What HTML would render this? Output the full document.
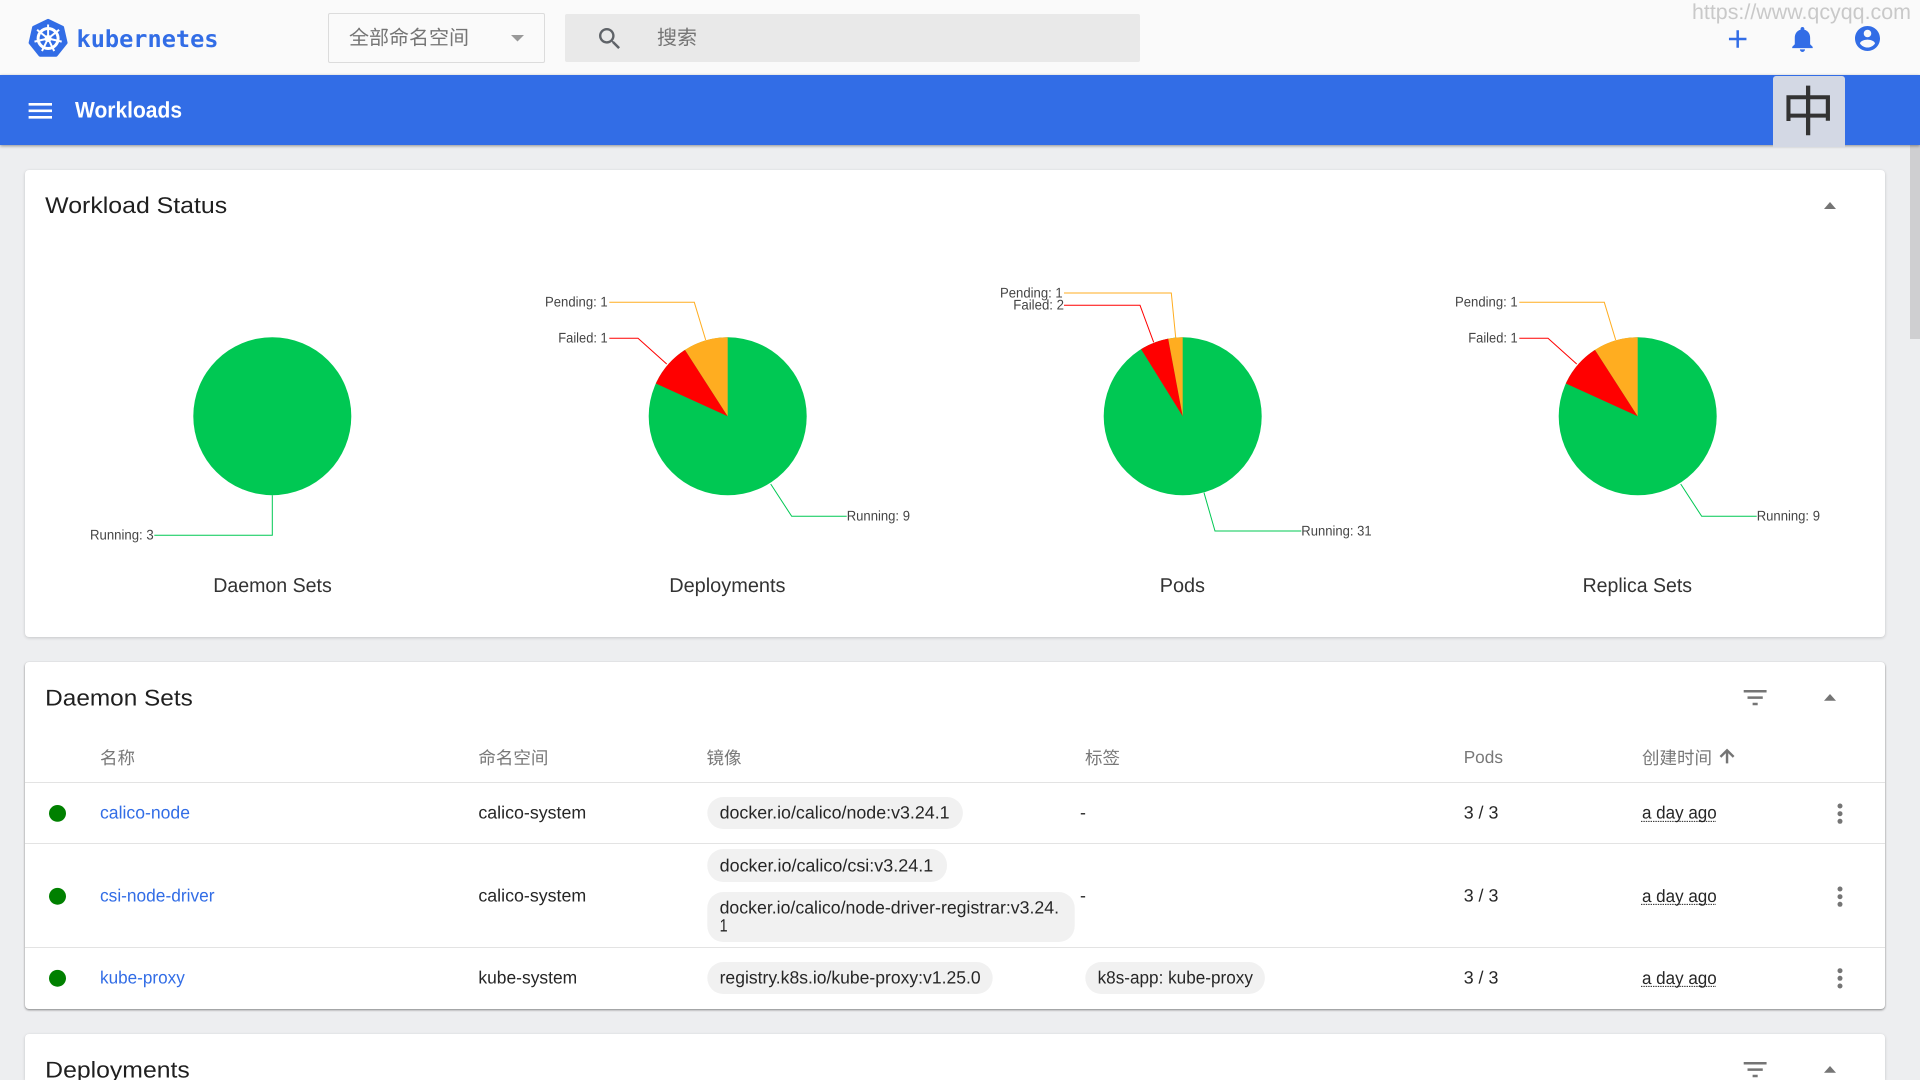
<!DOCTYPE html>
<html lang="zh">
<head>
<meta charset="utf-8">
<title>Workloads - Kubernetes Dashboard</title>
<style>
html,body{margin:0;padding:0;width:1920px;height:1080px;overflow:hidden;background:#edeef0}
#root{position:relative;width:1920px;height:1080px;overflow:hidden;background:#edeef0}
.abs{position:absolute}
.top{left:0;top:0;width:1920px;height:75px;background:#fafafa}
.bar{left:0;top:75px;width:1920px;height:70px;background:#326de6;box-shadow:0 1px 3px rgba(0,0,0,.4)}
.lang{left:1773px;top:76px;width:72px;height:71px;background:#d3d8e4;border-radius:3px 3px 0 0}
.select{left:328px;top:13px;width:215px;height:48px;border:1px solid #dcdcdc;border-radius:2px;background:#fafafa}
.search{left:565px;top:14px;width:575px;height:48px;background:#e9e9e9;border-radius:2px}
.card{left:25px;width:1860px;background:#fff;border-radius:4px;box-shadow:0 1px 3px rgba(0,0,0,.16),0 0 1px rgba(0,0,0,.05)}
.thumb{left:1910px;top:145px;width:10px;height:194px;background:#cfcfd1}
svg{position:absolute;left:0;top:0}
text{font-family:"Liberation Sans","Noto Sans CJK SC",sans-serif;text-rendering:geometricPrecision}
.t{font-size:22.8px;fill:#1f1f1f}
.lb{font-size:14px;fill:#444;transform:translateY(-.7px)}
.pt{font-size:20px;fill:#333}
.h{font-size:17.5px;fill:#787878;transform:translateY(-.4px)}
.c{font-size:17.8px;fill:#262626;transform:translateY(-.6px)}
.a{font-size:17.8px;fill:#326de6;transform:translateY(-.6px)}
.ic{fill:#757575}
</style>
</head>
<body>
<div id="root">
<div class="abs thumb"></div>
<div class="abs top"></div>
<div class="abs bar"></div>
<div class="abs lang"></div>
<div class="abs select"></div>
<div class="abs search"></div>
<div class="abs card" style="top:170px;height:467px"></div>
<div class="abs card" style="top:662px;height:347px;box-shadow:0 1px 2px rgba(0,0,0,.45),0 0 1px rgba(0,0,0,.06)"></div>
<div class="abs card" style="top:1034px;height:46px;border-radius:4px 4px 0 0"></div>

<svg width="1920" height="1080" viewBox="0 0 1920 1080" xmlns="http://www.w3.org/2000/svg">
<!-- logo -->
<g transform="translate(.6 0)">
<polygon points="47.5,20.4 62,27.4 65.5,42.8 55.6,55.2 39.4,55.2 29.5,42.8 33,27.4" fill="#326de6" stroke="#326de6" stroke-width="3" stroke-linejoin="round"/>
<g stroke="#fff" fill="none">
<circle cx="47.5" cy="38.5" r="10" stroke-width="3"/>
<g stroke-width="2">
<line x1="47.5" y1="38.5" x2="47.5" y2="24.5"/>
<line x1="47.5" y1="38.5" x2="58.5" y2="29.8"/>
<line x1="47.5" y1="38.5" x2="61.1" y2="41.6"/>
<line x1="47.5" y1="38.5" x2="53.6" y2="51.1"/>
<line x1="47.5" y1="38.5" x2="41.4" y2="51.1"/>
<line x1="47.5" y1="38.5" x2="33.9" y2="41.6"/>
<line x1="47.5" y1="38.5" x2="36.5" y2="29.8"/>
</g>
</g>
<circle cx="47.5" cy="38.5" r="3.5" fill="#fff"/>
</g>
<text x="76.5" y="47" style="font-family:'DejaVu Sans Mono',monospace;font-weight:700;font-size:23.3px;fill:#326de6" textLength="142" lengthAdjust="spacingAndGlyphs">kubernetes</text>

<!-- namespace + search -->
<text x="349" y="44.6" style="font-size:20px;fill:#757575">全部命名空间</text>
<polygon points="511,35 524,35 517.5,41.5" fill="#999"/>
<g transform="translate(595.4 24.4) scale(1.2)"><path fill="#5f6368" d="M15.5 14h-.79l-.28-.27C15.41 12.59 16 11.11 16 9.5 16 5.91 13.09 3 9.5 3S3 5.91 3 9.5 5.91 16 9.5 16c1.61 0 3.09-.59 4.23-1.57l.27.28v.79l5 4.99L20.49 19l-4.99-5zm-6 0C7.01 14 5 11.99 5 9.5S7.01 5 9.5 5 14 7.01 14 9.5 11.99 14 9.5 14z"/></g>
<text x="657" y="44.6" style="font-size:20px;fill:#757575">搜索</text>

<!-- watermark + right actions -->
<text x="1692" y="19" style="font-size:21.5px;fill:#c9c9c9" textLength="219" lengthAdjust="spacingAndGlyphs">https://www.qcyqq.com</text>
<g transform="translate(1722.7 24) scale(1.25)"><path fill="#326de6" d="M19 13h-6v6h-2v-6H5v-2h6V5h2v6h6v2z"/></g>
<g transform="translate(1787.1 23.8) scale(1.28)"><path fill="#326de6" d="M12 22c1.1 0 2-.9 2-2h-4c0 1.1.89 2 2 2zm6-6v-5c0-3.07-1.64-5.64-4.5-6.32V4c0-.83-.67-1.5-1.5-1.5s-1.5.67-1.5 1.5v.68C7.63 5.36 6 7.92 6 11v5l-2 2v1h16v-1l-2-2z"/></g>
<g transform="translate(1852.5 23.5) scale(1.25)"><path fill="#326de6" d="M12 2C6.48 2 2 6.48 2 12s4.48 10 10 10 10-4.48 10-10S17.52 2 12 2zm0 3c1.66 0 3 1.34 3 3s-1.34 3-3 3-3-1.34-3-3 1.34-3 3-3zm0 14.2c-2.5 0-4.71-1.28-6-3.22.03-1.99 4-3.08 6-3.08 1.99 0 5.97 1.09 6 3.08-1.29 1.94-3.5 3.22-6 3.22z"/></g>

<!-- toolbar -->
<g transform="translate(24.7 95.2) scale(1.3)"><path fill="#fff" d="M3 18h18v-2H3v2zm0-5h18v-2H3v2zm0-7v2h18V6H3z"/></g>
<text x="75" y="117.3" style="font-size:22.5px;font-weight:700;fill:#fff" textLength="107" lengthAdjust="spacingAndGlyphs">Workloads</text>
<text x="1808.3" y="131" text-anchor="middle" style="font-size:54px;fill:#333">中</text>

<!-- workload status -->
<text class="t" x="45.2" y="213" textLength="182" lengthAdjust="spacingAndGlyphs">Workload Status</text>
<polygon class="ic" points="1824,209 1836,209 1830,202"/>

<!-- daemon sets pie -->
<circle cx="272.3" cy="416.2" r="79" fill="#00c853"/>
<polyline points="272.3,495.3 272.3,535.3 154.3,535.3" fill="none" stroke="#00c853" stroke-width="1"/>
<text class="lb" x="90" y="540" textLength="63.7" lengthAdjust="spacingAndGlyphs">Running: 3</text>
<text class="pt" x="213.2" y="592" textLength="118.6" lengthAdjust="spacingAndGlyphs">Daemon Sets</text>

<!-- deployments pie -->
<g transform="translate(727.7 416.3)">
<circle r="79" fill="#00c853"/>
<path d="M0 0L-71.86 -32.8A79 79 0 0 1 -42.7 -66.46Z" fill="#f00"/>
<path d="M0 0L-42.7 -66.46A79 79 0 0 1 0 -79Z" fill="#ffad20"/>
</g>
<polyline points="705.7,340 694.3,302.3 609.3,302.3" fill="none" stroke="#ffad20" stroke-width="1"/>
<polyline points="666.7,364 638,338.3 609.3,338.3" fill="none" stroke="#f00" stroke-width="1"/>
<polyline points="770.7,484 791.7,516.3 846.7,516.3" fill="none" stroke="#00c853" stroke-width="1"/>
<text class="lb" x="545" y="307.3" textLength="62.7" lengthAdjust="spacingAndGlyphs">Pending: 1</text>
<text class="lb" x="558.3" y="343.3" textLength="49.4" lengthAdjust="spacingAndGlyphs">Failed: 1</text>
<text class="lb" x="846.7" y="521.3" textLength="63.3" lengthAdjust="spacingAndGlyphs">Running: 9</text>
<text class="pt" x="669.2" y="592" textLength="116.3" lengthAdjust="spacingAndGlyphs">Deployments</text>

<!-- pods pie -->
<g transform="translate(1182.7 416.3)">
<circle r="79" fill="#00c853"/>
<path d="M0 0L-41.6 -67.1A79 79 0 0 1 -14.5 -77.66Z" fill="#f00"/>
<path d="M0 0L-14.5 -77.66A79 79 0 0 1 0 -79Z" fill="#ffad20"/>
</g>
<polyline points="1175.7,337.7 1171.3,293 1064,293" fill="none" stroke="#ffad20" stroke-width="1"/>
<polyline points="1153.7,342.3 1140,305.3 1064,305.3" fill="none" stroke="#f00" stroke-width="1"/>
<polyline points="1204,492.7 1215,531 1301.3,531" fill="none" stroke="#00c853" stroke-width="1"/>
<text class="lb" x="1000" y="298.3" textLength="62.7" lengthAdjust="spacingAndGlyphs">Pending: 1</text>
<text class="lb" x="1013.3" y="310" textLength="50.7" lengthAdjust="spacingAndGlyphs">Failed: 2</text>
<text class="lb" x="1301.3" y="536" textLength="70.4" lengthAdjust="spacingAndGlyphs">Running: 31</text>
<text class="pt" x="1159.7" y="592" textLength="45.3" lengthAdjust="spacingAndGlyphs">Pods</text>

<!-- replica sets pie -->
<g transform="translate(1637.7 416.3)">
<circle r="79" fill="#00c853"/>
<path d="M0 0L-71.86 -32.8A79 79 0 0 1 -42.7 -66.46Z" fill="#f00"/>
<path d="M0 0L-42.7 -66.46A79 79 0 0 1 0 -79Z" fill="#ffad20"/>
</g>
<polyline points="1615.7,340 1604.3,302.3 1519.3,302.3" fill="none" stroke="#ffad20" stroke-width="1"/>
<polyline points="1576.7,364 1548,338.3 1519.3,338.3" fill="none" stroke="#f00" stroke-width="1"/>
<polyline points="1680.7,484 1701.7,516.3 1756.7,516.3" fill="none" stroke="#00c853" stroke-width="1"/>
<text class="lb" x="1455" y="307.3" textLength="62.7" lengthAdjust="spacingAndGlyphs">Pending: 1</text>
<text class="lb" x="1468.3" y="343.3" textLength="49.4" lengthAdjust="spacingAndGlyphs">Failed: 1</text>
<text class="lb" x="1756.7" y="521.3" textLength="63.3" lengthAdjust="spacingAndGlyphs">Running: 9</text>
<text class="pt" x="1582.6" y="592" textLength="109.4" lengthAdjust="spacingAndGlyphs">Replica Sets</text>

<!-- daemon sets table -->
<text class="t" x="45.2" y="705.7" textLength="147.6" lengthAdjust="spacingAndGlyphs">Daemon Sets</text>
<g transform="translate(1739.9 682.4) scale(1.27)"><path class="ic" d="M10 18h4v-2h-4v2zM3 6v2h18V6H3zm3 7h12v-2H6v2z"/></g>
<polygon class="ic" points="1824,700.7 1836,700.7 1830,694"/>

<text class="h" x="100" y="764.6">名称</text>
<text class="h" x="478.4" y="764.6">命名空间</text>
<text class="h" x="706.5" y="764.6">镜像</text>
<text class="h" x="1085" y="764.6">标签</text>
<text class="h" x="1463.7" y="763.3" textLength="39.3" lengthAdjust="spacingAndGlyphs" style="font-weight:500">Pods</text>
<text class="h" x="1642" y="764.6">创建时间</text>
<g transform="translate(1716.6 745.6) scale(.87)"><path class="ic" stroke="#757575" stroke-width=".8" d="M4 12l1.41 1.41L11 7.83V20h2V7.83l5.58 5.59L20 12l-8-8-8 8z"/></g>

<rect x="25" y="782" width="1860" height="1" fill="#e3e3e3"/>
<rect x="25" y="843" width="1860" height="1" fill="#e3e3e3"/>
<rect x="25" y="947" width="1860" height="1" fill="#e3e3e3"/>

<!-- row 1 -->
<ellipse cx="57.5" cy="813.4" rx="8.5" ry="8.4" fill="#008000"/>
<text class="a" x="100" y="819.3" textLength="90" lengthAdjust="spacingAndGlyphs">calico-node</text>
<text class="c" x="478.4" y="819.3" textLength="107.8" lengthAdjust="spacingAndGlyphs">calico-system</text>
<rect x="707.3" y="797" width="255.6" height="32" rx="16" fill="#f1f1f1"/>
<text class="c" x="719.6" y="819" textLength="230" lengthAdjust="spacingAndGlyphs">docker.io/calico/node:v3.24.1</text>
<text class="c" x="1080" y="819">-</text>
<text class="c" x="1463.7" y="819.3" textLength="34.7" lengthAdjust="spacingAndGlyphs">3 / 3</text>
<text class="c" x="1642" y="819.3" textLength="74.7" lengthAdjust="spacingAndGlyphs">a day ago</text>
<line x1="1641" y1="821.4" x2="1716" y2="821.4" stroke="#222" stroke-width="1" stroke-dasharray="1.4 1"/>
<circle class="ic" cx="1840" cy="806" r="2.5"/><circle class="ic" cx="1840" cy="813.7" r="2.5"/><circle class="ic" cx="1840" cy="821.3" r="2.5"/>

<!-- row 2 -->
<ellipse cx="57.5" cy="896.3" rx="8.5" ry="8.4" fill="#008000"/>
<text class="a" x="100" y="902.3" textLength="114.5" lengthAdjust="spacingAndGlyphs">csi-node-driver</text>
<text class="c" x="478.4" y="902.3" textLength="107.8" lengthAdjust="spacingAndGlyphs">calico-system</text>
<rect x="707.3" y="849" width="239.7" height="33" rx="16" fill="#f1f1f1"/>
<text class="c" x="719.6" y="872" textLength="213.6" lengthAdjust="spacingAndGlyphs">docker.io/calico/csi:v3.24.1</text>
<rect x="707.3" y="892" width="367.4" height="50" rx="16" fill="#f1f1f1"/>
<text class="c" x="719.6" y="914" textLength="339.4" lengthAdjust="spacingAndGlyphs">docker.io/calico/node-driver-registrar:v3.24.</text>
<text class="c" x="719.6" y="932" textLength="8" lengthAdjust="spacingAndGlyphs">1</text>
<text class="c" x="1080" y="902">-</text>
<text class="c" x="1463.7" y="902.3" textLength="34.7" lengthAdjust="spacingAndGlyphs">3 / 3</text>
<text class="c" x="1642" y="902.7" textLength="74.7" lengthAdjust="spacingAndGlyphs">a day ago</text>
<line x1="1641" y1="904.4" x2="1716" y2="904.4" stroke="#222" stroke-width="1" stroke-dasharray="1.4 1"/>
<circle class="ic" cx="1840" cy="889" r="2.5"/><circle class="ic" cx="1840" cy="896.7" r="2.5"/><circle class="ic" cx="1840" cy="904.3" r="2.5"/>

<!-- row 3 -->
<ellipse cx="57.5" cy="978.3" rx="8.5" ry="8.4" fill="#008000"/>
<text class="a" x="100" y="984" textLength="84.8" lengthAdjust="spacingAndGlyphs">kube-proxy</text>
<text class="c" x="478.4" y="984" textLength="98.8" lengthAdjust="spacingAndGlyphs">kube-system</text>
<rect x="707.3" y="962" width="285.4" height="32" rx="16" fill="#f1f1f1"/>
<text class="c" x="719.6" y="984" textLength="261" lengthAdjust="spacingAndGlyphs">registry.k8s.io/kube-proxy:v1.25.0</text>
<rect x="1085.3" y="962" width="179.6" height="32" rx="16" fill="#f1f1f1"/>
<text class="c" x="1097.6" y="984" textLength="155.3" lengthAdjust="spacingAndGlyphs">k8s-app: kube-proxy</text>
<text class="c" x="1463.7" y="984" textLength="34.7" lengthAdjust="spacingAndGlyphs">3 / 3</text>
<text class="c" x="1642" y="984.7" textLength="74.7" lengthAdjust="spacingAndGlyphs">a day ago</text>
<line x1="1641" y1="986.4" x2="1716" y2="986.4" stroke="#222" stroke-width="1" stroke-dasharray="1.4 1"/>
<circle class="ic" cx="1840" cy="970.7" r="2.5"/><circle class="ic" cx="1840" cy="978.3" r="2.5"/><circle class="ic" cx="1840" cy="986" r="2.5"/>

<!-- deployments card header -->
<text class="t" x="45.2" y="1077.3" textLength="144.6" lengthAdjust="spacingAndGlyphs">Deployments</text>
<g transform="translate(1739.9 1054.4) scale(1.27)"><path class="ic" d="M10 18h4v-2h-4v2zM3 6v2h18V6H3zm3 7h12v-2H6v2z"/></g>
<polygon class="ic" points="1824,1072.7 1836,1072.7 1830,1066"/>
</svg>
</div>
</body>
</html>
